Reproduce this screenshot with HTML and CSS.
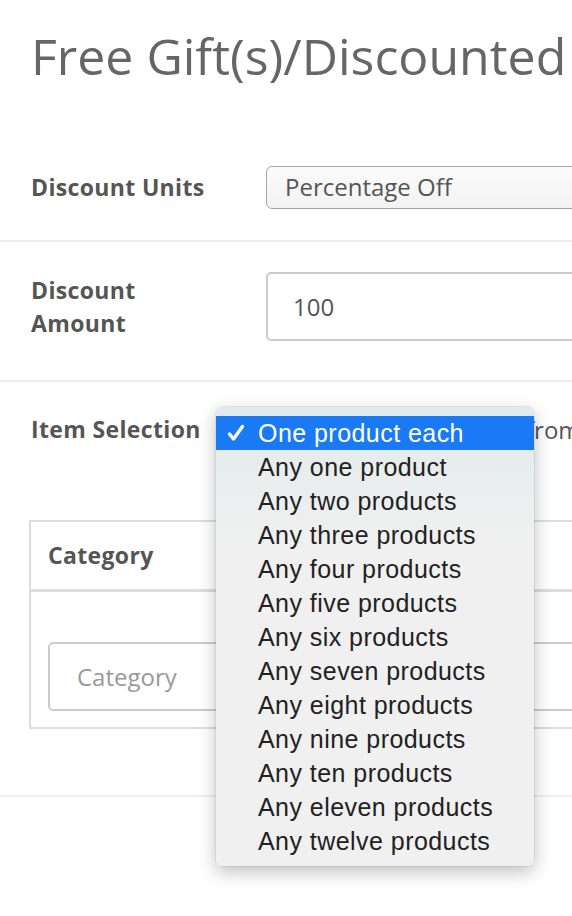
FILE: index.html
```html
<!DOCTYPE html>
<html>
<head>
<meta charset="utf-8">
<link rel="stylesheet" href="styles.css">
</head>
<body>
<div class="page">
  <h1 class="title">Free Gift(s)/Discounted</h1>

  <div class="row row-units">
    <div class="label">Discount Units</div>
    <div class="select">Percentage Off</div>
  </div>

  <div class="row row-amount">
    <div class="label">Discount<br>Amount</div>
    <div class="input">100</div>
  </div>

  <div class="row row-items">
    <div class="item-line">
      <div class="label label-inline">Item Selection</div>
      <div class="select select-hidden">One product each</div>
      <div class="after">from</div>
    </div>

    <div class="table">
      <div class="thead">
        <div class="th">Category</div>
      </div>
      <div class="tbody">
        <div class="input input-wide placeholder">Category</div>
      </div>
    </div>

    <div class="menu">
      <div class="menu-item selected"><svg class="check" width="18" height="18" viewBox="0 0 18 18"><path d="M2.5 10 L6.5 15 L15.5 2.5" fill="none" stroke="#ffffff" stroke-width="3.4" stroke-linecap="round" stroke-linejoin="round"/></svg>One product each</div>
      <div class="menu-item">Any one product</div>
      <div class="menu-item">Any two products</div>
      <div class="menu-item">Any three products</div>
      <div class="menu-item">Any four products</div>
      <div class="menu-item">Any five products</div>
      <div class="menu-item">Any six products</div>
      <div class="menu-item">Any seven products</div>
      <div class="menu-item">Any eight products</div>
      <div class="menu-item">Any nine products</div>
      <div class="menu-item">Any ten products</div>
      <div class="menu-item">Any eleven products</div>
      <div class="menu-item">Any twelve products</div>
    </div>
  </div>
</div>
</body>
</html>
```
FILE: styles.css
```css
html, body {
  margin: 0;
  padding: 0;
  background: #ffffff;
  overflow: hidden;
}

body {
  width: 572px;
  height: 916px;
  font-family: "Open Sans", "Liberation Sans", sans-serif;
  color: #555555;
}

.page {
  position: relative;
  width: 572px;
  height: 916px;
  overflow-x: clip;
}

.title {
  margin: 0;
  padding: 26px 0 0 31px;
  font-size: 50px;
  line-height: 60px;
  font-weight: 400;
  color: #666666;
  white-space: nowrap;
}

.row {
  display: flex;
  align-items: center;
  padding-left: 31px;
  border-bottom: 2px solid #eeeeee;
}

.row-units {
  padding-top: 80px;
  padding-bottom: 31px;
}

.row-amount {
  padding-top: 30px;
  padding-bottom: 39px;
}

.row-items {
  position: relative;
  display: block;
  padding-top: 26px;
  padding-bottom: 66px;
}

.label {
  flex: 0 0 235px;
  width: 235px;
  font-size: 23px;
  font-weight: 700;
  letter-spacing: 0.35px;
  line-height: 33px;
  color: #555555;
  white-space: nowrap;
}

.select {
  flex: 0 0 auto;
  box-sizing: border-box;
  width: 400px;
  height: 43px;
  padding-left: 18px;
  border: 1.5px solid #a6a6a6;
  border-radius: 6px;
  background: linear-gradient(#fbfbfb, #f2f2f2);
  font-size: 24px;
  line-height: 40px;
  color: #555555;
  white-space: nowrap;
}

.input {
  flex: 0 0 auto;
  box-sizing: border-box;
  width: 400px;
  height: 69px;
  padding-left: 25px;
  border: 2px solid #cccccc;
  border-radius: 5px;
  background: #ffffff;
  font-size: 24px;
  line-height: 65px;
  color: #555555;
  white-space: nowrap;
}

.item-line {
  display: flex;
  align-items: center;
  white-space: nowrap;
}

.label-inline {
  flex: 0 0 185px;
  width: 185px;
}

.select-hidden {
  width: 300px;
}

.after {
  margin-left: 10px;
  font-size: 24px;
  color: #555555;
}

.table {
  box-sizing: border-box;
  width: 700px;
  margin-top: 69px;
  margin-left: -2px;
  border: 2px solid #dddddd;
}

.thead {
  box-sizing: border-box;
  height: 70px;
  display: flex;
  align-items: center;
  padding-left: 17px;
  padding-bottom: 2px;
  border-bottom: 3px solid #dddddd;
}

.th {
  font-size: 23px;
  font-weight: 700;
  letter-spacing: 0.35px;
  color: #555555;
}

.tbody {
  padding: 50px 0 16px 17px;
}

.input-wide {
  width: 660px;
  padding-left: 27px;
}

.placeholder {
  color: #999999;
}

.menu {
  position: absolute;
  left: 216px;
  top: 25px;
  width: 318px;
  box-sizing: border-box;
  padding: 9px 0 8px;
  border-radius: 6px;
  background: linear-gradient(#dfeaec 0px, #e8eded 60px, #f0f0f0 140px, #f0f0f0 100%);
  box-shadow: 0 6px 18px rgba(0, 0, 0, 0.25), 0 0 0 0.5px rgba(0, 0, 0, 0.12);
  font-family: "Liberation Sans", Arial, sans-serif;
  font-size: 25px;
  letter-spacing: 0.45px;
  color: #222222;
  z-index: 10;
}

.menu-item {
  position: relative;
  height: 34px;
  line-height: 34px;
  padding-left: 42px;
  white-space: nowrap;
}

.menu-item.selected {
  background: #1a7af5;
  color: #ffffff;
}

.check {
  position: absolute;
  left: 11px;
  top: 8px;
}
```
